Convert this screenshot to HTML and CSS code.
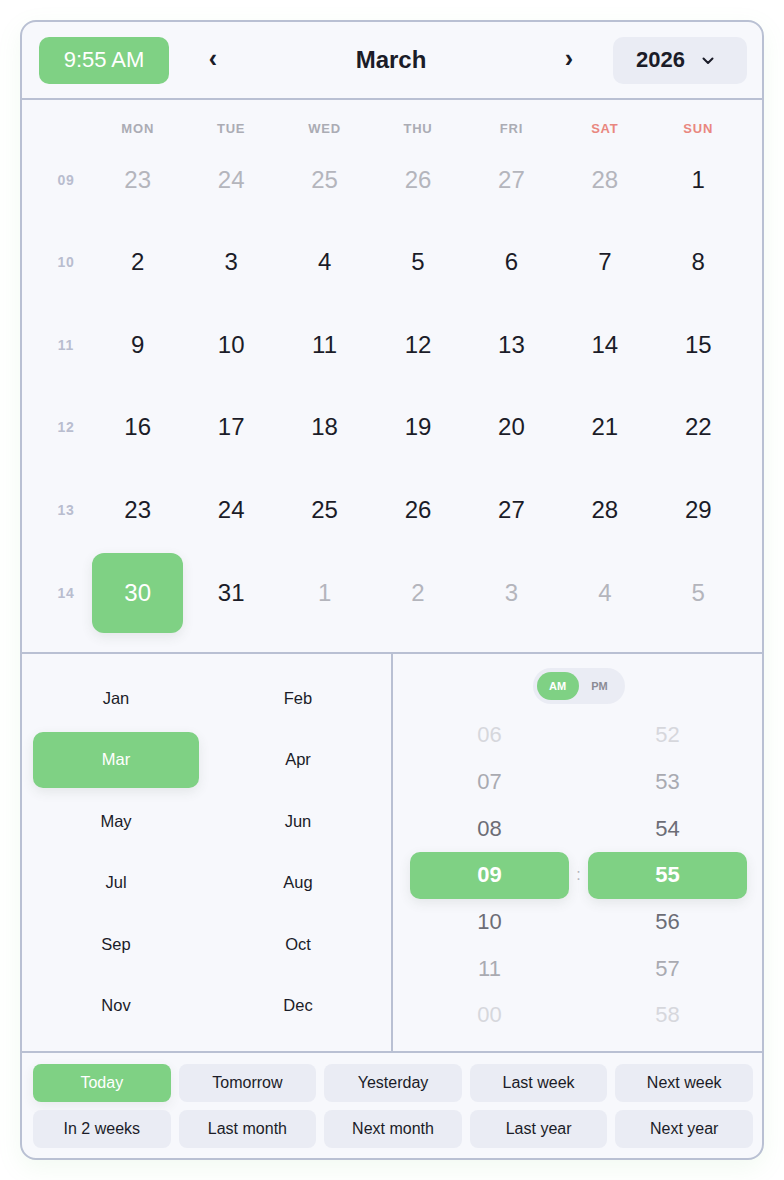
FILE: index.html
```html
<!DOCTYPE html>
<html lang="en">
<head>
<meta charset="utf-8">
<title>Date picker</title>
<link rel="stylesheet" href="styles.css">
</head>
<body>
<div class="card">
  <div class="header">
    <button class="time-btn">9:55 AM</button>
    <div class="nav">
      <button class="arrow">‹</button>
      <div class="title">March</div>
      <button class="arrow">›</button>
    </div>
    <button class="year-btn"><span>2026</span><svg class="chev" width="12" height="8" viewBox="0 0 12 8"><path d="M1.5 1.5 L6 6 L10.5 1.5" fill="none" stroke="#1b1c28" stroke-width="2" stroke-linecap="round" stroke-linejoin="round"/></svg></button>
  </div>

  <div class="calendar">
    <div class="wk"></div>
    <div class="dow">MON</div><div class="dow">TUE</div><div class="dow">WED</div><div class="dow">THU</div><div class="dow">FRI</div><div class="dow weekend">SAT</div><div class="dow weekend">SUN</div>

    <div class="wk">09</div>
    <div class="day out">23</div><div class="day out">24</div><div class="day out">25</div><div class="day out">26</div><div class="day out">27</div><div class="day out">28</div><div class="day">1</div>

    <div class="wk">10</div>
    <div class="day">2</div><div class="day">3</div><div class="day">4</div><div class="day">5</div><div class="day">6</div><div class="day">7</div><div class="day">8</div>

    <div class="wk">11</div>
    <div class="day">9</div><div class="day">10</div><div class="day">11</div><div class="day">12</div><div class="day">13</div><div class="day">14</div><div class="day">15</div>

    <div class="wk">12</div>
    <div class="day">16</div><div class="day">17</div><div class="day">18</div><div class="day">19</div><div class="day">20</div><div class="day">21</div><div class="day">22</div>

    <div class="wk">13</div>
    <div class="day">23</div><div class="day">24</div><div class="day">25</div><div class="day">26</div><div class="day">27</div><div class="day">28</div><div class="day">29</div>

    <div class="wk">14</div>
    <div class="day selected">30</div><div class="day">31</div><div class="day out">1</div><div class="day out">2</div><div class="day out">3</div><div class="day out">4</div><div class="day out">5</div>
  </div>

  <div class="lower">
    <div class="months">
      <div class="month">Jan</div><div class="month">Feb</div>
      <div class="month selected">Mar</div><div class="month">Apr</div>
      <div class="month">May</div><div class="month">Jun</div>
      <div class="month">Jul</div><div class="month">Aug</div>
      <div class="month">Sep</div><div class="month">Oct</div>
      <div class="month">Nov</div><div class="month">Dec</div>
    </div>
    <div class="timepanel">
      <div class="ampm">
        <span class="seg active">AM</span><span class="seg">PM</span>
      </div>
      <div class="wheel">
        <div class="col">
          <div class="t far">06</div>
          <div class="t mid">07</div>
          <div class="t near">08</div>
          <div class="t sel">09</div>
          <div class="t near">10</div>
          <div class="t mid">11</div>
          <div class="t far">00</div>
        </div>
        <div class="colon">:</div>
        <div class="col">
          <div class="t far">52</div>
          <div class="t mid">53</div>
          <div class="t near">54</div>
          <div class="t sel">55</div>
          <div class="t near">56</div>
          <div class="t mid">57</div>
          <div class="t far">58</div>
        </div>
      </div>
    </div>
  </div>

  <div class="quick">
    <button class="q active">Today</button>
    <button class="q">Tomorrow</button>
    <button class="q">Yesterday</button>
    <button class="q">Last week</button>
    <button class="q">Next week</button>
    <button class="q">In 2 weeks</button>
    <button class="q">Last month</button>
    <button class="q">Next month</button>
    <button class="q">Last year</button>
    <button class="q">Next year</button>
  </div>
</div>
</body>
</html>
```

FILE: styles.css
```css
* { box-sizing: border-box; }

html, body {
  margin: 0;
  background: #ffffff;
}

body {
  padding: 20px;
  font-family: "Liberation Sans", Arial, Helvetica, sans-serif;
  color: #1b1c28;
}

button {
  font-family: inherit;
  border: none;
  margin: 0;
  cursor: pointer;
}

.card {
  width: 744px;
  background: #f7f8fc;
  border: 2px solid #b9c0d3;
  border-radius: 16px;
  overflow: hidden;
  box-shadow: 0 8px 24px rgba(127, 209, 131, 0.10);
}

/* Header */
.header {
  height: 78px;
  display: flex;
  align-items: center;
  padding: 0 15px 0 17px;
  border-bottom: 2px solid #b9c0d3;
}

.time-btn {
  width: 130px;
  height: 47px;
  border-radius: 10px;
  background: #7fd184;
  color: #ffffff;
  font-size: 22px;
  padding: 0;
}

.nav {
  flex: 1;
  display: flex;
  align-items: center;
  padding: 0 24px;
}

.arrow {
  width: 40px;
  height: 40px;
  background: transparent;
  font-size: 25px;
  font-weight: bold;
  color: #1b1c28;
  padding: 0 0 3px 0;
}

.title {
  flex: 1;
  text-align: center;
  font-size: 24px;
  font-weight: bold;
}

.year-btn {
  width: 134px;
  height: 47px;
  border-radius: 10px;
  background: #eaecf4;
  display: flex;
  align-items: center;
  gap: 17px;
  padding: 0 0 0 23px;
  font-size: 22px;
  font-weight: bold;
  color: #1b1c28;
}

.chev { display: block; margin-top: 1px; }

/* Calendar */
.calendar {
  height: 554px;
  padding: 19px 18px 20px 20px;
  display: grid;
  grid-template-columns: 48px repeat(7, 1fr);
  grid-template-rows: 18px repeat(6, 80px);
  column-gap: 2px;
  row-gap: 2.6px;
  border-bottom: 2px solid #b9c0d3;
}

.dow {
  display: flex;
  align-items: center;
  justify-content: center;
  font-size: 13px;
  font-weight: bold;
  letter-spacing: 0.8px;
  color: #abacb4;
}

.dow.weekend { color: #e9877f; }

.wk {
  display: flex;
  align-items: center;
  justify-content: center;
  font-size: 14px;
  font-weight: bold;
  letter-spacing: 0.8px;
  color: #b9bdcf;
}

.day {
  display: flex;
  align-items: center;
  justify-content: center;
  font-size: 24px;
  color: #1b1c28;
  border-radius: 12px;
}

.day.out { color: #b4b5bc; }

.day.selected {
  background: #7fd184;
  color: #ffffff;
  box-shadow: 0 4px 12px rgba(60, 80, 60, 0.10);
}

/* Lower */
.lower {
  height: 399px;
  display: grid;
  grid-template-columns: 371px 1fr;
  border-bottom: 2px solid #b9c0d3;
}

.months {
  border-right: 2px solid #b9c0d3;
  padding: 16px 10px 16px 11px;
  display: grid;
  grid-template-columns: 1fr 1fr;
  grid-template-rows: repeat(6, 56px);
  column-gap: 16px;
  row-gap: 5.6px;
}

.month {
  display: flex;
  align-items: center;
  justify-content: center;
  font-size: 16.5px;
  border-radius: 10px;
  color: #1b1c28;
}

.month.selected {
  background: #7fd184;
  color: #ffffff;
  box-shadow: 0 4px 12px rgba(60, 80, 60, 0.10);
}

.timepanel {
  padding: 14px 15px 0 17px;
  display: flex;
  flex-direction: column;
  align-items: stretch;
}

.ampm {
  align-self: center;
  display: flex;
  background: #eaecf4;
  border-radius: 18px;
  padding: 4px;
  height: 36px;
}

.seg {
  width: 42px;
  height: 28px;
  border-radius: 14px;
  display: flex;
  align-items: center;
  justify-content: center;
  font-size: 11px;
  font-weight: bold;
  color: #8a8b95;
}

.seg.active {
  background: #7fd184;
  color: #ffffff;
}

.wheel {
  margin-top: 8px;
  display: grid;
  grid-template-columns: 1fr 19px 1fr;
}

.col {
  display: flex;
  flex-direction: column;
}

.t {
  height: 46.67px;
  display: flex;
  align-items: center;
  justify-content: center;
  font-size: 22px;
  border-radius: 10px;
}

.t.far { color: #d6d7dc; }
.t.mid { color: #a9aab1; }
.t.near { color: #6c6d76; }

.t.sel {
  background: #7fd184;
  color: #ffffff;
  font-weight: bold;
  box-shadow: 0 4px 12px rgba(60, 80, 60, 0.10);
}

.colon {
  display: flex;
  align-items: center;
  justify-content: center;
  font-size: 16px;
  color: #b4b5bc;
  padding-top: 140px;
  height: 186.67px;
}

/* Quick buttons */
.quick {
  padding: 11px 9px 10px 11px;
  display: grid;
  grid-template-columns: repeat(5, 1fr);
  grid-template-rows: 38px 38px;
  gap: 8px;
}

.q {
  background: #eaecf4;
  border-radius: 8px;
  font-size: 16px;
  color: #1b1c28;
  padding: 0;
}

.q.active {
  background: #7fd184;
  color: #ffffff;
  box-shadow: 0 4px 12px rgba(60, 80, 60, 0.08);
}
```
